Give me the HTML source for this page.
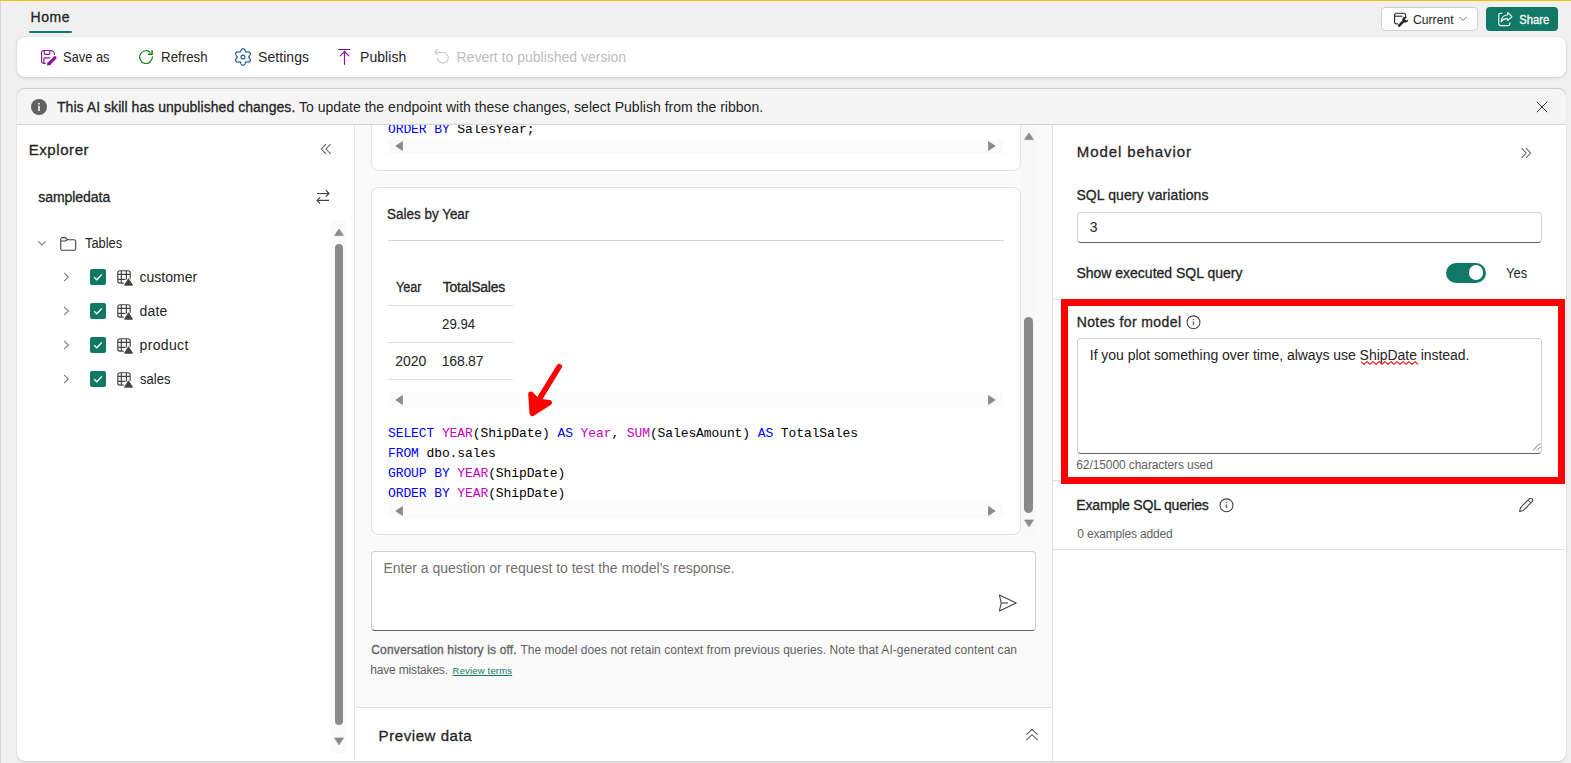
<!DOCTYPE html>
<html><head><meta charset="utf-8">
<style>
*{box-sizing:border-box;margin:0;padding:0}
html,body{width:1571px;height:763px;overflow:hidden;background:#f0f0f0;font-family:"Liberation Sans",sans-serif;color:#242424}
body{position:relative}
.a{position:absolute}
.t{position:absolute;white-space:nowrap;line-height:1}
.mono{font-family:"Liberation Mono",monospace}
svg{position:absolute;overflow:visible}
</style></head><body>
<!-- top yellow line + left strip -->
<div class="a" style="left:0;top:0;width:1571px;height:1px;background:#f0c400"></div>
<div class="a" style="left:0;top:1px;width:1571px;height:1px;background:#eceef4"></div>
<div class="a" style="left:0;top:1px;width:1px;height:762px;background:#d4d4d4"></div>

<!-- Home tab underline -->
<div class="a" style="left:29px;top:31px;width:43px;height:2px;background:#117865;border-radius:1px"></div>

<!-- Current button -->
<div class="a" style="left:1381px;top:7px;width:97px;height:24px;background:#fff;border:1px solid #d1d1d1;border-radius:4px"></div>
<svg style="left:1393px;top:12px" width="17" height="17" viewBox="0 0 17 17">
 <path d="M12.6 4.9 V3.3 A2 2 0 0 0 10.6 1.3 H3.6 A2 2 0 0 0 1.6 3.3 V9.9 A2 2 0 0 0 3.6 11.9 H4.9" fill="none" stroke="#242424" stroke-width="1.1"/>
 <path d="M1.6 4.2 H9.6" stroke="#242424" stroke-width="1.1"/>
 <path d="M6.1 13.7 L10.6 9.2" stroke="#242424" stroke-width="2.6" stroke-linecap="round"/>
 <circle cx="12.3" cy="7.6" r="2.9" fill="#242424"/>
 <path d="M11.9 7.1 L14.6 4.4 L16.2 6 L13.5 8.7 Z" fill="#fff"/>
</svg>
<svg style="left:1459px;top:16px" width="8" height="6" viewBox="0 0 8 6"><path d="M0.5 1 L4 4.5 L7.5 1" fill="none" stroke="#616161" stroke-width="0.9"/></svg>

<!-- Share button -->
<div class="a" style="left:1486px;top:7px;width:72px;height:24px;background:#117865;border-radius:4px"></div>
<svg style="left:1497px;top:11px" width="16" height="16" viewBox="0 0 16 16">
 <path d="M5.5 2.2 H3.6 A1.8 1.8 0 0 0 1.8 4 V12.8 A1.8 1.8 0 0 0 3.6 14.6 H11 A1.8 1.8 0 0 0 12.8 12.8 V11.6" fill="none" stroke="#fff" stroke-width="1.1"/>
 <path d="M10.6 1.5 L15 5.6 L10.6 9.6 V7.6 C7.6 7.6 5.6 8.6 4.2 10.6 C4.6 7.2 6.8 4.2 10.6 3.8 Z" fill="none" stroke="#fff" stroke-width="1.05" stroke-linejoin="round"/>
</svg>

<!-- Ribbon card -->
<div class="a" style="left:17px;top:37px;width:1549px;height:40px;background:#fff;border-radius:8px;box-shadow:0 1px 3px rgba(0,0,0,0.15),0 0 1px rgba(0,0,0,0.12)"></div>
<!-- Save as icon -->
<svg style="left:40px;top:49px" width="17" height="17" viewBox="0 0 17 17">
 <path d="M5.8 14.3 H3.6 A2 2 0 0 1 1.6 12.3 V3.5 A2 2 0 0 1 3.6 1.5 H10.6 A3.8 3.8 0 0 1 14.4 5.3 V5.9" fill="none" stroke="#881798" stroke-width="1.15"/>
 <path d="M4.3 1.5 V4.6 A0.8 0.8 0 0 0 5.1 5.4 H9 A0.8 0.8 0 0 0 9.8 4.6 V1.5" fill="none" stroke="#881798" stroke-width="1.15"/>
 <path d="M3.9 14.3 V9.7 A0.8 0.8 0 0 1 4.7 8.9 H10.2" fill="none" stroke="#881798" stroke-width="1.15"/>
 <path d="M15 8.7 L9.4 14.3" stroke="#881798" stroke-width="3.3" stroke-linecap="round"/>
 <path d="M7.3 16.2 L8 12.9 L10.9 15.5 Z" fill="#881798" stroke="#881798" stroke-width="0.6" stroke-linejoin="round"/>
</svg>
<!-- Refresh icon -->
<svg style="left:138px;top:49px" width="17" height="17" viewBox="0 0 17 17">
 <path d="M14.4 7.4 A6.4 6.4 0 1 1 12.6 3.6" fill="none" stroke="#107c10" stroke-width="1.2"/>
 <path d="M14.1 1.2 V5.3 H10" fill="none" stroke="#107c10" stroke-width="1.4"/>
</svg>
<!-- Settings icon -->
<svg style="left:234px;top:48px" width="18" height="18" viewBox="0 0 18 18">
 <path d="M9.00 0.75 L9.29 0.78 L9.57 0.86 L9.84 0.99 L10.10 1.17 L10.34 1.39 L10.56 1.65 L10.76 1.93 L10.94 2.23 L11.10 2.54 L11.24 2.85 L11.36 3.15 L11.48 3.44 L11.59 3.69 L11.71 3.91 L11.85 4.06 L12.06 4.11 L12.30 4.10 L12.58 4.07 L12.88 4.03 L13.20 3.99 L13.54 3.95 L13.89 3.94 L14.24 3.94 L14.59 3.97 L14.92 4.03 L15.23 4.13 L15.52 4.27 L15.77 4.44 L15.98 4.64 L16.14 4.87 L16.26 5.14 L16.34 5.42 L16.36 5.72 L16.33 6.04 L16.26 6.36 L16.15 6.68 L16.00 6.99 L15.83 7.30 L15.64 7.59 L15.44 7.86 L15.24 8.12 L15.06 8.36 L14.89 8.59 L14.77 8.80 L14.70 9.00 L14.77 9.20 L14.89 9.41 L15.06 9.64 L15.24 9.88 L15.44 10.14 L15.64 10.41 L15.83 10.70 L16.00 11.01 L16.15 11.32 L16.26 11.64 L16.33 11.96 L16.36 12.28 L16.34 12.58 L16.26 12.86 L16.14 13.12 L15.98 13.36 L15.77 13.56 L15.52 13.73 L15.23 13.87 L14.92 13.97 L14.59 14.03 L14.24 14.06 L13.89 14.06 L13.54 14.05 L13.20 14.01 L12.88 13.97 L12.58 13.93 L12.30 13.90 L12.06 13.89 L11.85 13.94 L11.71 14.09 L11.59 14.31 L11.48 14.56 L11.36 14.85 L11.24 15.15 L11.10 15.46 L10.94 15.77 L10.76 16.07 L10.56 16.35 L10.34 16.61 L10.10 16.83 L9.84 17.01 L9.57 17.14 L9.29 17.22 L9.00 17.25 L8.71 17.22 L8.43 17.14 L8.16 17.01 L7.90 16.83 L7.66 16.61 L7.44 16.35 L7.24 16.07 L7.06 15.77 L6.90 15.46 L6.76 15.15 L6.64 14.85 L6.52 14.56 L6.41 14.31 L6.29 14.09 L6.15 13.94 L5.94 13.89 L5.70 13.90 L5.42 13.93 L5.12 13.97 L4.80 14.01 L4.46 14.05 L4.11 14.06 L3.76 14.06 L3.41 14.03 L3.08 13.97 L2.77 13.87 L2.48 13.73 L2.23 13.56 L2.02 13.36 L1.86 13.13 L1.74 12.86 L1.66 12.58 L1.64 12.28 L1.67 11.96 L1.74 11.64 L1.85 11.32 L2.00 11.01 L2.17 10.70 L2.36 10.41 L2.56 10.14 L2.76 9.88 L2.94 9.64 L3.11 9.41 L3.23 9.20 L3.30 9.00 L3.23 8.80 L3.11 8.59 L2.94 8.36 L2.76 8.12 L2.56 7.86 L2.36 7.59 L2.17 7.30 L2.00 6.99 L1.85 6.68 L1.74 6.36 L1.67 6.04 L1.64 5.72 L1.66 5.42 L1.74 5.14 L1.86 4.87 L2.02 4.64 L2.23 4.44 L2.48 4.27 L2.77 4.13 L3.08 4.03 L3.41 3.97 L3.76 3.94 L4.11 3.94 L4.46 3.95 L4.80 3.99 L5.12 4.03 L5.42 4.07 L5.70 4.10 L5.94 4.11 L6.15 4.06 L6.29 3.91 L6.41 3.69 L6.52 3.44 L6.64 3.15 L6.76 2.85 L6.90 2.54 L7.06 2.23 L7.24 1.93 L7.44 1.65 L7.66 1.39 L7.90 1.17 L8.16 0.99 L8.43 0.86 L8.71 0.78 Z" fill="none" stroke="#0f548c" stroke-width="1.15" stroke-linejoin="round"/>
 <circle cx="9" cy="9" r="1.95" fill="none" stroke="#0f548c" stroke-width="1.15"/>
</svg>
<!-- Publish icon -->
<svg style="left:336px;top:48px" width="16" height="18" viewBox="0 0 16 18">
 <path d="M2.8 1.5 H14.1" stroke="#881798" stroke-width="1.2" stroke-linecap="round"/>
 <path d="M8.5 16.3 V3.5 M4.2 7.8 L8.5 3.4 L12.8 7.8" fill="none" stroke="#881798" stroke-width="1.2" stroke-linecap="round"/>
</svg>
<!-- Revert icon -->
<svg style="left:433px;top:48px" width="17" height="17" viewBox="0 0 17 17">
 <path d="M4.5 9.7 A5.4 5.4 0 1 0 9.9 4.3 H2.3" fill="none" stroke="#c8d0c8" stroke-width="1.2"/>
 <path d="M4.6 1.2 L2 4.3 L4.6 7.2" fill="none" stroke="#c8d0c8" stroke-width="1.2"/>
</svg>

<!-- Message bar -->
<div class="a" style="left:17px;top:89px;width:1549px;height:36px;background:#f5f5f5;border-radius:8px 8px 0 0;box-shadow:0 -0.5px 1px rgba(0,0,0,0.16),0 0 1px rgba(0,0,0,0.1)"></div>
<svg style="left:31px;top:99px" width="16" height="16" viewBox="0 0 16 16">
 <circle cx="8" cy="8" r="8" fill="#616161"/>
 <rect x="7.2" y="6.8" width="1.6" height="5.2" rx="0.5" fill="#f5f5f5"/>
 <circle cx="8" cy="4.8" r="0.95" fill="#f5f5f5"/>
</svg>
<svg style="left:1536px;top:101px" width="12" height="12" viewBox="0 0 12 12"><path d="M0.8 0.8 L11.2 11.2 M11.2 0.8 L0.8 11.2" stroke="#3a3a3a" stroke-width="1"/></svg>

<!-- Main area -->
<div class="a" style="left:17px;top:124px;width:1549px;height:637px;background:#fff;border-top:1px solid #d6d6d6;border-radius:0 0 8px 8px;box-shadow:0 1px 2px rgba(0,0,0,0.16),0 0 1px rgba(0,0,0,0.1)"></div>
<!-- center panel -->
<div class="a" style="left:354px;top:125px;width:699px;height:636px;background:#fafafa;border-left:1px solid #e0e0e0;border-right:1px solid #e0e0e0"></div>
<div class="a" style="left:355px;top:125px;width:698px;height:582px;overflow:hidden">
  <!-- card 1 (scrolled) -->
  <div class="a" style="left:16px;top:-60px;width:650px;height:106px;background:#fff;border:1px solid #e0e0e0;border-radius:8px"></div>
  <div class="a" style="left:33px;top:13.5px;width:616px;height:15.5px;background:#fbfbfb"></div>
  <!-- card 2 -->
  <div class="a" style="left:16px;top:62px;width:650px;height:348px;background:#fff;border:1px solid #e0e0e0;border-radius:8px"></div>
  <div class="a" style="left:33px;top:115px;width:616px;height:1px;background:#d6d6d6"></div>
  <div class="a" style="left:33px;top:180px;width:125px;height:1px;background:#e0e0e0"></div>
  <div class="a" style="left:33px;top:217px;width:125px;height:1px;background:#e0e0e0"></div>
  <div class="a" style="left:33px;top:254px;width:125px;height:1px;background:#e0e0e0"></div>
  <div class="a" style="left:33px;top:266.5px;width:616px;height:15.5px;background:#fbfbfb"></div>
  <div class="a" style="left:33px;top:378px;width:616px;height:15px;background:#fbfbfb"></div>
  <!-- vertical scrollbar -->
  <div class="a" style="left:666px;top:0;width:15px;height:410px;background:#f8f8f8"></div>
</div>
<!-- h-scroll arrows -->
<svg style="left:395px;top:141px" width="8" height="10" viewBox="0 0 8 10"><path d="M7.5 0.6 V9.4 L0.8 5 Z" fill="#8a8a8a" stroke="#8a8a8a" stroke-width="0.8" stroke-linejoin="round"/></svg>
<svg style="left:988px;top:141px" width="8" height="10" viewBox="0 0 8 10"><path d="M0.5 0.6 V9.4 L7.2 5 Z" fill="#8a8a8a" stroke="#8a8a8a" stroke-width="0.8" stroke-linejoin="round"/></svg>
<svg style="left:395px;top:394.5px" width="8" height="10" viewBox="0 0 8 10"><path d="M7.5 0.6 V9.4 L0.8 5 Z" fill="#8a8a8a" stroke="#8a8a8a" stroke-width="0.8" stroke-linejoin="round"/></svg>
<svg style="left:988px;top:394.5px" width="8" height="10" viewBox="0 0 8 10"><path d="M0.5 0.6 V9.4 L7.2 5 Z" fill="#8a8a8a" stroke="#8a8a8a" stroke-width="0.8" stroke-linejoin="round"/></svg>
<svg style="left:395px;top:505.5px" width="8" height="10" viewBox="0 0 8 10"><path d="M7.5 0.6 V9.4 L0.8 5 Z" fill="#8a8a8a" stroke="#8a8a8a" stroke-width="0.8" stroke-linejoin="round"/></svg>
<svg style="left:988px;top:505.5px" width="8" height="10" viewBox="0 0 8 10"><path d="M0.5 0.6 V9.4 L7.2 5 Z" fill="#8a8a8a" stroke="#8a8a8a" stroke-width="0.8" stroke-linejoin="round"/></svg>
<!-- center v-scroll -->
<svg style="left:1024px;top:132px" width="10" height="9" viewBox="0 0 10 9"><path d="M0.6 7.6 H9.4 L5 1 Z" fill="#8a8a8a" stroke="#8a8a8a" stroke-width="0.8" stroke-linejoin="round"/></svg>
<div class="a" style="left:1024px;top:316.5px;width:9px;height:196px;background:#8a8a8a;border-radius:4.5px"></div>
<svg style="left:1024px;top:519px" width="10" height="9" viewBox="0 0 10 9"><path d="M0.6 1 H9.4 L5 7.8 Z" fill="#8a8a8a" stroke="#8a8a8a" stroke-width="0.8" stroke-linejoin="round"/></svg>

<!-- red arrow -->
<svg style="left:520px;top:355px" width="50" height="70" viewBox="520 355 50 70">
 <path d="M559.2 366.6 L537.5 402" stroke="#ff0000" stroke-width="5.6" stroke-linecap="round"/>
 <path d="M530.9 394.2 L537.5 401.2 L549.2 402.6 L532.2 413.4 Z" fill="#ff0000" stroke="#ff0000" stroke-width="5.4" stroke-linejoin="round"/>
</svg>
<!-- input box -->
<div class="a" style="left:371px;top:551px;width:665px;height:80px;background:#fff;border:1px solid #d1d1d1;border-bottom:1px solid #616161;border-radius:4px"></div>
<svg style="left:998px;top:594px" width="20" height="18" viewBox="0 0 20 18">
 <path d="M1.4 1 L18.2 9 L1.4 17 L3.2 9 Z" fill="none" stroke="#424242" stroke-width="1.1" stroke-linejoin="round"/>
 <path d="M3.2 9 H10" stroke="#424242" stroke-width="1.1"/>
</svg>

<!-- preview data -->
<div class="a" style="left:355px;top:706.5px;width:697px;height:54.5px;background:#fff;border-top:1px solid #e0e0e0"></div>
<svg style="left:1025px;top:728px" width="14" height="14" viewBox="0 0 14 14">
 <path d="M1.2 6.8 L7 1.3 L12.8 6.8 M1.2 12.2 L7 6.7 L12.8 12.2" fill="none" stroke="#616161" stroke-width="1.1"/>
</svg>

<!-- Explorer icons -->
<svg style="left:319px;top:143px" width="12" height="12" viewBox="0 0 12 12">
 <path d="M7 1.2 L2.4 6 L7 10.8 M11.6 1.2 L7 6 L11.6 10.8" fill="none" stroke="#616161" stroke-width="1.05"/>
</svg>
<svg style="left:315px;top:189px" width="15" height="15" viewBox="0 0 15 15">
 <path d="M2 4.5 H14 M10.8 1.2 L14 4.5 L10.8 7.8" fill="none" stroke="#424242" stroke-width="1.1"/>
 <path d="M14 11.4 H2 M5.2 8.1 L2 11.4 L5.2 14.7" fill="none" stroke="#424242" stroke-width="1.1"/>
</svg>
<svg style="left:36px;top:240px" width="11" height="7" viewBox="0 0 11 7"><path d="M2.3 1.3 L6 5 L9.7 1.3" fill="none" stroke="#7a7a7a" stroke-width="1.1"/></svg>
<svg style="left:59px;top:235px" width="18" height="16" viewBox="0 0 18 16">
 <path d="M1.7 13.5 V4.4 A1.8 1.8 0 0 1 3.5 2.6 H6.3 L8.3 4.7 H14.9 A1.8 1.8 0 0 1 16.7 6.5 V13.5 A1.8 1.8 0 0 1 14.9 15.3 H3.5 A1.8 1.8 0 0 1 1.7 13.5 Z M1.7 6 H6.3 L8.3 4.7" fill="none" stroke="#424242" stroke-width="1.1"/>
</svg>
<!-- rows -->
<svg style="left:63px;top:272px" width="7" height="10" viewBox="0 0 7 10"><path d="M1 0.8 L5.4 5 L1 9.2" fill="none" stroke="#7a7a7a" stroke-width="1.05"/></svg>
<div class="a" style="left:90px;top:269px;width:16px;height:16px;background:#117865;border-radius:2px"></div>
<svg style="left:90px;top:269px" width="16" height="16" viewBox="0 0 16 16"><path d="M4.2 8.3 L6.8 10.8 L11.9 5.4" fill="none" stroke="#fff" stroke-width="1.3"/></svg>
<svg style="left:116px;top:268px" width="18" height="18" viewBox="0 0 18 18"><path d="M7.8 15.1 H3.8 A2 2 0 0 1 1.8 13.1 V4.7 A2 2 0 0 1 3.8 2.7 H12.2 A2 2 0 0 1 14.2 4.7 V10.8 M1.8 6.3 H14.2 M1.8 11.4 H9.4 M5.3 2.7 V15.1 M10.4 2.7 V11.4" fill="none" stroke="#424242" stroke-width="1.15"/><path d="M12.5 10.7 L16.5 17.2 H8.5 Z" fill="#424242" stroke="#424242" stroke-width="0.9" stroke-linejoin="round"/></svg>
<svg style="left:63px;top:306px" width="7" height="10" viewBox="0 0 7 10"><path d="M1 0.8 L5.4 5 L1 9.2" fill="none" stroke="#7a7a7a" stroke-width="1.05"/></svg>
<div class="a" style="left:90px;top:303px;width:16px;height:16px;background:#117865;border-radius:2px"></div>
<svg style="left:90px;top:303px" width="16" height="16" viewBox="0 0 16 16"><path d="M4.2 8.3 L6.8 10.8 L11.9 5.4" fill="none" stroke="#fff" stroke-width="1.3"/></svg>
<svg style="left:116px;top:302px" width="18" height="18" viewBox="0 0 18 18"><path d="M7.8 15.1 H3.8 A2 2 0 0 1 1.8 13.1 V4.7 A2 2 0 0 1 3.8 2.7 H12.2 A2 2 0 0 1 14.2 4.7 V10.8 M1.8 6.3 H14.2 M1.8 11.4 H9.4 M5.3 2.7 V15.1 M10.4 2.7 V11.4" fill="none" stroke="#424242" stroke-width="1.15"/><path d="M12.5 10.7 L16.5 17.2 H8.5 Z" fill="#424242" stroke="#424242" stroke-width="0.9" stroke-linejoin="round"/></svg>
<svg style="left:63px;top:340px" width="7" height="10" viewBox="0 0 7 10"><path d="M1 0.8 L5.4 5 L1 9.2" fill="none" stroke="#7a7a7a" stroke-width="1.05"/></svg>
<div class="a" style="left:90px;top:337px;width:16px;height:16px;background:#117865;border-radius:2px"></div>
<svg style="left:90px;top:337px" width="16" height="16" viewBox="0 0 16 16"><path d="M4.2 8.3 L6.8 10.8 L11.9 5.4" fill="none" stroke="#fff" stroke-width="1.3"/></svg>
<svg style="left:116px;top:336px" width="18" height="18" viewBox="0 0 18 18"><path d="M7.8 15.1 H3.8 A2 2 0 0 1 1.8 13.1 V4.7 A2 2 0 0 1 3.8 2.7 H12.2 A2 2 0 0 1 14.2 4.7 V10.8 M1.8 6.3 H14.2 M1.8 11.4 H9.4 M5.3 2.7 V15.1 M10.4 2.7 V11.4" fill="none" stroke="#424242" stroke-width="1.15"/><path d="M12.5 10.7 L16.5 17.2 H8.5 Z" fill="#424242" stroke="#424242" stroke-width="0.9" stroke-linejoin="round"/></svg>
<svg style="left:63px;top:374px" width="7" height="10" viewBox="0 0 7 10"><path d="M1 0.8 L5.4 5 L1 9.2" fill="none" stroke="#7a7a7a" stroke-width="1.05"/></svg>
<div class="a" style="left:90px;top:371px;width:16px;height:16px;background:#117865;border-radius:2px"></div>
<svg style="left:90px;top:371px" width="16" height="16" viewBox="0 0 16 16"><path d="M4.2 8.3 L6.8 10.8 L11.9 5.4" fill="none" stroke="#fff" stroke-width="1.3"/></svg>
<svg style="left:116px;top:370px" width="18" height="18" viewBox="0 0 18 18"><path d="M7.8 15.1 H3.8 A2 2 0 0 1 1.8 13.1 V4.7 A2 2 0 0 1 3.8 2.7 H12.2 A2 2 0 0 1 14.2 4.7 V10.8 M1.8 6.3 H14.2 M1.8 11.4 H9.4 M5.3 2.7 V15.1 M10.4 2.7 V11.4" fill="none" stroke="#424242" stroke-width="1.15"/><path d="M12.5 10.7 L16.5 17.2 H8.5 Z" fill="#424242" stroke="#424242" stroke-width="0.9" stroke-linejoin="round"/></svg>
<!-- explorer scrollbar -->
<div class="a" style="left:331px;top:220px;width:15px;height:533px;background:#fafafa"></div>
<svg style="left:333.5px;top:227.5px" width="10" height="9" viewBox="0 0 10 9"><path d="M0.6 7.6 H9.4 L5 1 Z" fill="#8a8a8a" stroke="#8a8a8a" stroke-width="0.8" stroke-linejoin="round"/></svg>
<div class="a" style="left:334.5px;top:243.5px;width:8.5px;height:481.5px;background:#8a8a8a;border-radius:4.25px"></div>
<svg style="left:333.5px;top:737px" width="10" height="9" viewBox="0 0 10 9"><path d="M0.6 1 H9.4 L5 7.8 Z" fill="#8a8a8a" stroke="#8a8a8a" stroke-width="0.8" stroke-linejoin="round"/></svg>

<!-- Right panel -->
<svg style="left:1520px;top:147px" width="12" height="12" viewBox="0 0 12 12">
 <path d="M1.6 1.2 L6.2 6 L1.6 10.8 M6 1.2 L10.6 6 L6 10.8" fill="none" stroke="#616161" stroke-width="1.05"/>
</svg>
<div class="a" style="left:1077px;top:211.5px;width:465px;height:31px;background:#fff;border:1px solid #d1d1d1;border-bottom:1px solid #616161;border-radius:4px"></div>
<div class="a" style="left:1445.5px;top:262.5px;width:40.5px;height:20.5px;background:#117865;border-radius:10.25px"></div>
<div class="a" style="left:1468.8px;top:265.4px;width:14.6px;height:14.6px;background:#fff;border-radius:50%"></div>
<div class="a" style="left:1053px;top:299px;width:512px;height:1px;background:#e0e0e0"></div>
<div class="a" style="left:1053px;top:480px;width:512px;height:1px;background:#e0e0e0"></div>
<div class="a" style="left:1053px;top:549px;width:512px;height:1px;background:#e0e0e0"></div>
<!-- textarea -->
<div class="a" style="left:1077px;top:338px;width:465px;height:116px;background:#fff;border:1px solid #d1d1d1;border-bottom:1px solid #616161;border-radius:4px"></div>
<svg style="left:1532px;top:442px" width="9" height="9" viewBox="0 0 9 9"><path d="M1 8.4 L8.4 1 M5 8.4 L8.4 5" stroke="#616161" stroke-width="0.9"/></svg>
<svg style="left:1361px;top:360.3px" width="58" height="6" viewBox="0 0 58 6"><polyline points="0 1.6 3 4.4 6 1.6 9 4.4 12 1.6 15 4.4 18 1.6 21 4.4 24 1.6 27 4.4 30 1.6 33 4.4 36 1.6 39 4.4 42 1.6 45 4.4 48 1.6 51 4.4 54 1.6 57 4.4" fill="none" stroke="#f41a1a" stroke-width="1.2" stroke-linejoin="round"/></svg>
<!-- info icons -->
<svg style="left:1185.5px;top:314.8px" width="15" height="15" viewBox="0 0 15 15">
 <circle cx="7.5" cy="7.3" r="6.45" fill="none" stroke="#424242" stroke-width="1.05"/>
 <rect x="6.75" y="6.5" width="1.5" height="3.6" fill="#6a6a6a"/><rect x="6.75" y="4.2" width="1.5" height="1" fill="#555"/>
</svg>
<svg style="left:1218.5px;top:497.5px" width="15" height="15" viewBox="0 0 15 15">
 <circle cx="7.5" cy="7.3" r="6.45" fill="none" stroke="#424242" stroke-width="1.05"/>
 <rect x="6.75" y="6.5" width="1.5" height="3.6" fill="#6a6a6a"/><rect x="6.75" y="4.2" width="1.5" height="1" fill="#555"/>
</svg>
<!-- pencil -->
<svg style="left:1518px;top:497px" width="16" height="16" viewBox="0 0 16 16">
 <path d="M11.2 1.8 a1.9 1.9 0 0 1 2.9 2.9 L5.4 13.4 L1.6 14.4 L2.6 10.6 Z M10 3 L13 6" fill="none" stroke="#424242" stroke-width="1.05" stroke-linejoin="round"/>
</svg>

<!-- red box -->
<div class="a" style="left:1061px;top:299px;width:504px;height:185px;border:7px solid #ff0000"></div>

<div class="t" style="left:30.50px;top:10.35px;font-size:14px;font-weight:400;color:#242424;letter-spacing:0.600px;-webkit-text-stroke:0.3px #242424;">Home</div>
<div class="t" style="left:1413.00px;top:12.89px;font-size:13px;font-weight:400;color:#242424;letter-spacing:0.000px;transform:scaleX(0.9333);transform-origin:1px 0;">Current</div>
<div class="t" style="left:1518.60px;top:12.79px;font-size:13px;font-weight:400;color:#ffffff;letter-spacing:0.000px;transform:scaleX(0.8647);transform-origin:1px 0;-webkit-text-stroke:0.3px #ffffff;">Share</div>
<div class="t" style="left:63.00px;top:50.15px;font-size:14px;font-weight:400;color:#242424;letter-spacing:0.000px;transform:scaleX(0.9184);transform-origin:1px 0;">Save as</div>
<div class="t" style="left:161.00px;top:50.15px;font-size:14px;font-weight:400;color:#242424;letter-spacing:0.000px;transform:scaleX(0.9489);transform-origin:1px 0;">Refresh</div>
<div class="t" style="left:258.00px;top:50.15px;font-size:14px;font-weight:400;color:#242424;letter-spacing:0.057px;">Settings</div>
<div class="t" style="left:360.00px;top:50.15px;font-size:14px;font-weight:400;color:#242424;letter-spacing:0.067px;">Publish</div>
<div class="t" style="left:456.50px;top:50.15px;font-size:14px;font-weight:400;color:#bdbdbd;letter-spacing:0.000px;">Revert to published version</div>
<div class="t" style="left:57.00px;top:99.95px;font-size:14px;font-weight:400;color:#242424;letter-spacing:0.046px;-webkit-text-stroke:0.3px #242424;">This AI skill has unpublished changes.</div>
<div class="t" style="left:299.00px;top:99.95px;font-size:14px;font-weight:400;color:#242424;letter-spacing:0.025px;">To update the endpoint with these changes, select Publish from the ribbon.</div>
<div class="t" style="left:28.70px;top:141.60px;font-size:15px;font-weight:400;color:#242424;letter-spacing:0.571px;-webkit-text-stroke:0.3px #242424;">Explorer</div>
<div class="t" style="left:38.20px;top:190.05px;font-size:14px;font-weight:400;color:#242424;letter-spacing:-0.044px;-webkit-text-stroke:0.3px #242424;">sampledata</div>
<div class="t" style="left:84.70px;top:235.65px;font-size:14px;font-weight:400;color:#242424;letter-spacing:0.000px;transform:scaleX(0.9175);transform-origin:0px 0;">Tables</div>
<div class="t" style="left:139.50px;top:270.15px;font-size:14px;font-weight:400;color:#242424;letter-spacing:0.029px;">customer</div>
<div class="t" style="left:139.50px;top:303.75px;font-size:14px;font-weight:400;color:#242424;letter-spacing:0.200px;">date</div>
<div class="t" style="left:139.50px;top:337.65px;font-size:14px;font-weight:400;color:#242424;letter-spacing:0.350px;">product</div>
<div class="t" style="left:139.50px;top:371.65px;font-size:14px;font-weight:400;color:#242424;letter-spacing:0.000px;transform:scaleX(0.9290);transform-origin:1px 0;">sales</div>
<div class="t" style="left:1076.80px;top:143.70px;font-size:15px;font-weight:400;color:#242424;letter-spacing:0.892px;-webkit-text-stroke:0.3px #242424;">Model behavior</div>
<div class="t" style="left:1076.40px;top:187.95px;font-size:14px;font-weight:400;color:#242424;letter-spacing:0.095px;-webkit-text-stroke:0.3px #242424;">SQL query variations</div>
<div class="t" style="left:1089.80px;top:219.85px;font-size:14px;font-weight:400;color:#242424;letter-spacing:0.000px;">3</div>
<div class="t" style="left:1076.40px;top:265.95px;font-size:14px;font-weight:400;color:#242424;letter-spacing:0.000px;-webkit-text-stroke:0.3px #242424;">Show executed SQL query</div>
<div class="t" style="left:1505.60px;top:266.05px;font-size:14px;font-weight:400;color:#242424;letter-spacing:0.000px;transform:scaleX(0.9190);transform-origin:1px 0;">Yes</div>
<div class="t" style="left:1076.70px;top:315.05px;font-size:14px;font-weight:400;color:#242424;letter-spacing:0.393px;-webkit-text-stroke:0.3px #242424;">Notes for model</div>
<div class="t" style="left:1089.80px;top:347.85px;font-size:14px;font-weight:400;color:#242424;letter-spacing:-0.040px;">If you plot something over time, always use ShipDate instead.</div>
<div class="t" style="left:1076.30px;top:458.54px;font-size:12px;font-weight:400;color:#616161;letter-spacing:-0.096px;">62/15000 characters used</div>
<div class="t" style="left:1076.30px;top:497.55px;font-size:14px;font-weight:400;color:#242424;letter-spacing:-0.172px;-webkit-text-stroke:0.3px #242424;">Example SQL queries</div>
<div class="t" style="left:1077.30px;top:527.54px;font-size:12px;font-weight:400;color:#616161;letter-spacing:-0.187px;">0 examples added</div>
<div class="t" style="left:387.00px;top:207.25px;font-size:14px;font-weight:400;color:#242424;letter-spacing:0.000px;transform:scaleX(0.9612);transform-origin:1px 0;-webkit-text-stroke:0.3px #242424;">Sales by Year</div>
<div class="t" style="left:396.20px;top:280.15px;font-size:14px;font-weight:400;color:#242424;letter-spacing:0.000px;transform:scaleX(0.9034);transform-origin:0px 0;-webkit-text-stroke:0.3px #242424;">Year</div>
<div class="t" style="left:442.80px;top:280.15px;font-size:14px;font-weight:400;color:#242424;letter-spacing:-0.244px;-webkit-text-stroke:0.3px #242424;">TotalSales</div>
<div class="t" style="left:441.80px;top:317.15px;font-size:14px;font-weight:400;color:#242424;letter-spacing:0.000px;transform:scaleX(0.9441);transform-origin:1px 0;">29.94</div>
<div class="t" style="left:395.20px;top:354.15px;font-size:14px;font-weight:400;color:#242424;letter-spacing:0.000px;">2020</div>
<div class="t" style="left:441.80px;top:354.15px;font-size:14px;font-weight:400;color:#242424;letter-spacing:-0.240px;">168.87</div>
<div class="t" style="left:383.40px;top:561.05px;font-size:14px;font-weight:400;color:#707070;letter-spacing:0.000px;">Enter a question or request to test the model's response.</div>
<div class="t" style="left:371.30px;top:643.84px;font-size:12px;font-weight:400;color:#616161;letter-spacing:0.152px;-webkit-text-stroke:0.3px #616161;">Conversation history is off.</div>
<div class="t" style="left:520.40px;top:643.84px;font-size:12px;font-weight:400;color:#616161;letter-spacing:0.041px;">The model does not retain context from previous queries. Note that AI-generated content can</div>
<div class="t" style="left:370.30px;top:663.84px;font-size:12px;font-weight:400;color:#616161;letter-spacing:-0.177px;">have mistakes.</div>
<div class="t" style="left:452.60px;top:666.46px;font-size:9.5px;font-weight:400;color:#117865;letter-spacing:0.173px;text-decoration:underline;">Review terms</div>
<div class="t" style="left:378.60px;top:728.30px;font-size:15px;font-weight:400;color:#242424;letter-spacing:0.573px;-webkit-text-stroke:0.3px #242424;">Preview data</div>
<div class="a" style="left:380px;top:125px;width:300px;height:12px;overflow:hidden"><div style="position:absolute;left:-380px;top:-125px;width:1000px;height:200px"><div class="t mono" style="left:388px;top:122.74px;font-size:13px;letter-spacing:-0.1px"><span style="color:#0000ff">ORDER BY</span><span style="color:#000000"> SalesYear;</span></div></div></div>
<div class="t mono" style="left:388px;top:427.04px;font-size:13px;letter-spacing:-0.1px"><span style="color:#0000ff">SELECT</span><span style="color:#000000"> </span><span style="color:#c800c8">YEAR</span><span style="color:#000000">(ShipDate) </span><span style="color:#0000ff">AS</span><span style="color:#000000"> </span><span style="color:#c800c8">Year</span><span style="color:#000000">, </span><span style="color:#c800c8">SUM</span><span style="color:#000000">(SalesAmount) </span><span style="color:#0000ff">AS</span><span style="color:#000000"> TotalSales</span></div>
<div class="t mono" style="left:388px;top:446.64px;font-size:13px;letter-spacing:-0.1px"><span style="color:#0000ff">FROM</span><span style="color:#000000"> dbo.sales</span></div>
<div class="t mono" style="left:388px;top:466.64px;font-size:13px;letter-spacing:-0.1px"><span style="color:#0000ff">GROUP BY</span><span style="color:#000000"> </span><span style="color:#c800c8">YEAR</span><span style="color:#000000">(ShipDate)</span></div>
<div class="t mono" style="left:388px;top:486.64px;font-size:13px;letter-spacing:-0.1px"><span style="color:#0000ff">ORDER BY</span><span style="color:#000000"> </span><span style="color:#c800c8">YEAR</span><span style="color:#000000">(ShipDate)</span></div>
</body></html>
